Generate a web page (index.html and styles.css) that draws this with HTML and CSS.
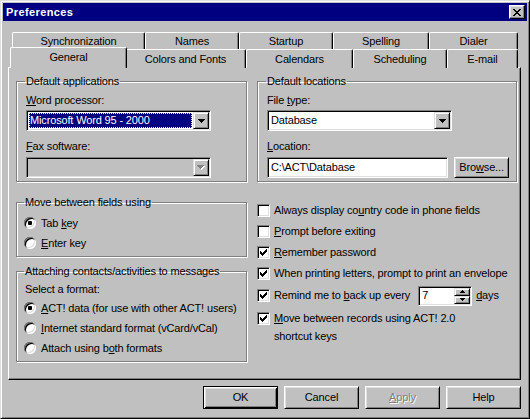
FILE: index.html
```html
<!DOCTYPE html>
<html>
<head>
<meta charset="utf-8">
<title>Preferences</title>
<link rel="stylesheet" href="styles.css">
</head>
<body>
<div class="window">
  <div class="titlebar">
    <span class="title">Preferences</span>
    <span class="close"><svg width="8" height="7" viewBox="0 0 8 7" shape-rendering="crispEdges"><path d="M0 0h2v1h-2z M6 0h2v1h-2z M1 1h2v1h-2z M5 1h2v1h-2z M2 2h4v1h-4z M3 3h2v1h-2z M2 4h4v1h-4z M1 5h2v1h-2z M5 5h2v1h-2z M0 6h2v1h-2z M6 6h2v1h-2z" fill="#000"/></svg></span>
  </div>
  <div class="main">
    <div class="tabrow back">
      <div class="tab t-sync">Synchronization</div>
      <div class="tab t-names">Names</div>
      <div class="tab t-startup">Startup</div>
      <div class="tab t-spell">Spelling</div>
      <div class="tab t-dialer">Dialer</div>
    </div>
    <div class="tabrow front">
      <div class="tab selected t-general">General</div>
      <div class="tab t-colors">Colors and Fonts</div>
      <div class="tab t-cal">Calendars</div>
      <div class="tab t-sched">Scheduling</div>
      <div class="tab t-email">E-mail</div>
    </div>
    <div class="panel">
      <div class="layout">
        <fieldset class="group apps">
          <legend>Default applications</legend>
          <div class="fields">
            <div class="label"><u>W</u>ord processor:</div>
            <div class="combo gap-s">
              <span class="ctext sel">Microsoft Word 95 - 2000</span>
              <span class="drop"><svg width="7" height="4" viewBox="0 0 7 4" shape-rendering="crispEdges"><path d="M0 0h7v1h-7z M1 1h5v1h-5z M2 2h3v1h-3z M3 3h1v1h-1z" fill="#000"/></svg></span>
            </div>
            <div class="label gap-l"><u>F</u>ax software:</div>
            <div class="combo disabled gap-m">
              <span class="ctext"></span>
              <span class="drop"><svg width="8" height="5" viewBox="0 0 8 5" shape-rendering="crispEdges"><path d="M1 1h7v1h-7z M2 2h5v1h-5z M3 3h3v1h-3z M4 4h1v1h-1z" fill="#fff"/><path d="M0 0h7v1h-7z M1 1h5v1h-5z M2 2h3v1h-3z M3 3h1v1h-1z" fill="#808080"/></svg></span>
            </div>
          </div>
        </fieldset>
        <fieldset class="group locs">
          <legend>Default locations</legend>
          <div class="fields">
            <div class="label">File <u>t</u>ype:</div>
            <div class="combo gap-s">
              <span class="ctext">Database</span>
              <span class="drop"><svg width="7" height="4" viewBox="0 0 7 4" shape-rendering="crispEdges"><path d="M0 0h7v1h-7z M1 1h5v1h-5z M2 2h3v1h-3z M3 3h1v1h-1z" fill="#000"/></svg></span>
            </div>
            <div class="label gap-l"><u>L</u>ocation:</div>
            <div class="locrow gap-m">
              <div class="field">C:\ACT\Database</div>
              <div class="btn browse">Bro<u>w</u>se...</div>
            </div>
          </div>
        </fieldset>
        <div class="leftcol">
          <fieldset class="group move">
            <legend>Move between fields using</legend>
            <div class="opt"><span class="radio on"></span><span>Tab <u>k</u>ey</span></div>
            <div class="opt"><span class="radio"></span><span><u>E</u>nter key</span></div>
          </fieldset>
          <fieldset class="group attach">
            <legend>Attaching contacts/activities to messages</legend>
            <div class="label sub">Select a format:</div>
            <div class="opts">
              <div class="opt"><span class="radio on"></span><span><u>A</u>CT! data (for use with other ACT! users)</span></div>
              <div class="opt"><span class="radio"></span><span><u>I</u>nternet standard format (vCard/vCal)</span></div>
              <div class="opt"><span class="radio"></span><span>Attach using b<u>o</u>th formats</span></div>
            </div>
          </fieldset>
        </div>
        <div class="checks">
          <div class="chk"><span class="box"></span><span>Always display co<u>u</u>ntry code in phone fields</span></div>
          <div class="chk"><span class="box"></span><span><u>P</u>rompt before exiting</span></div>
          <div class="chk"><span class="box"><svg width="7" height="7" viewBox="0 0 7 7" shape-rendering="crispEdges"><path d="M6 0h1v1h-1z M5 1h2v1h-2z M0 2h1v1h-1z M4 2h3v1h-3z M0 3h2v1h-2z M3 3h3v1h-3z M0 4h5v1h-5z M1 5h3v1h-3z M2 6h1v1h-1z" fill="#000"/></svg></span><span><u>R</u>emember password</span></div>
          <div class="chk"><span class="box"><svg width="7" height="7" viewBox="0 0 7 7" shape-rendering="crispEdges"><path d="M6 0h1v1h-1z M5 1h2v1h-2z M0 2h1v1h-1z M4 2h3v1h-3z M0 3h2v1h-2z M3 3h3v1h-3z M0 4h5v1h-5z M1 5h3v1h-3z M2 6h1v1h-1z" fill="#000"/></svg></span><span>When printing letters, prompt to print an envelope</span></div>
          <div class="chk spinrow"><span class="box"><svg width="7" height="7" viewBox="0 0 7 7" shape-rendering="crispEdges"><path d="M6 0h1v1h-1z M5 1h2v1h-2z M0 2h1v1h-1z M4 2h3v1h-3z M0 3h2v1h-2z M3 3h3v1h-3z M0 4h5v1h-5z M1 5h3v1h-3z M2 6h1v1h-1z" fill="#000"/></svg></span><span>Remind me to <u>b</u>ack up every</span>
            <span class="spin">
              <span class="spintext">7</span>
              <span class="updown">
                <span class="arr"><svg width="5" height="3" viewBox="0 0 5 3" shape-rendering="crispEdges"><path d="M2 0h1v1h-1z M1 1h3v1h-3z M0 2h5v1h-5z" fill="#000"/></svg></span>
                <span class="arr"><svg width="5" height="3" viewBox="0 0 5 3" shape-rendering="crispEdges"><path d="M0 0h5v1h-5z M1 1h3v1h-3z M2 2h1v1h-1z" fill="#000"/></svg></span>
              </span>
            </span>
            <span class="days"><u>d</u>ays</span>
          </div>
          <div class="chk multi"><span class="box"><svg width="7" height="7" viewBox="0 0 7 7" shape-rendering="crispEdges"><path d="M6 0h1v1h-1z M5 1h2v1h-2z M0 2h1v1h-1z M4 2h3v1h-3z M0 3h2v1h-2z M3 3h3v1h-3z M0 4h5v1h-5z M1 5h3v1h-3z M2 6h1v1h-1z" fill="#000"/></svg></span><span><u>M</u>ove between records using ACT! 2.0<br>shortcut keys</span></div>
        </div>
      </div>
    </div>
    <div class="buttons">
      <div class="btn dlg default">OK</div>
      <div class="btn dlg">Cancel</div>
      <div class="btn dlg off"><u>A</u>pply</div>
      <div class="btn dlg">Help</div>
    </div>
  </div>
</div>
</body>
</html>
```

FILE: styles.css
```css
* { box-sizing: border-box; }
html, body { margin: 0; padding: 0; }
body {
  background: #c0c0c0;
  font-family: "Liberation Sans", Arial, sans-serif;
  font-size: 11px;
  line-height: 13px;
  letter-spacing: -0.15px;
  color: #000;
}
u { text-underline-offset: 1px; }

.window {
  width: 530px;
  height: 419px;
  background: #c0c0c0;
  border: 1px solid;
  border-color: #dfdfdf #000 #000 #dfdfdf;
  box-shadow: inset 1px 1px #fff, inset -1px -1px #808080;
  padding: 2px;
}

.titlebar {
  height: 18px;
  background: #000080;
  color: #fff;
  display: flex;
  align-items: center;
  justify-content: space-between;
  padding: 0 2px 0 3px;
}
.title { font-weight: bold; letter-spacing: 0.4px; }
.close {
  width: 16px;
  height: 14px;
  background: #c0c0c0;
  border: 1px solid;
  border-color: #fff #000 #000 #fff;
  box-shadow: inset -1px -1px #808080, inset 1px 1px #dfdfdf;
  display: flex;
  align-items: center;
  justify-content: center;
}
.close svg { display: block; }

.main { margin: 11px 0 0 5px; width: 513px; }

.tabrow { display: flex; margin-left: 4px; }
.tabrow.back { height: 17px; }
.tabrow.front { height: 18px; }
.tab {
  height: 100%;
  background: #c0c0c0;
  border-top: 1px solid #fff;
  border-left: 1px solid #fff;
  border-right: 1px solid #000;
  box-shadow: inset -1px 0 #808080;
  border-radius: 2px 2px 0 0;
  text-align: center;
  white-space: nowrap;
}
.back .tab { padding-top: 2px; }
.front .tab { padding-top: 3px; height: 19px; }
.tab.selected {
  position: relative;
  z-index: 1;
  height: 21px;
  margin: -2px -2px 0 -2px;
}
.t-sync { width: 133px; }
.t-names { width: 94px; }
.t-startup { width: 94px; }
.t-spell { width: 96px; }
.t-dialer { width: 89px; }
.t-general { width: 117px; }
.t-colors { width: 121px; }
.t-cal { width: 107px; }
.t-sched { width: 94px; }
.t-email { width: 71px; }

.panel {
  height: 313px;
  border: 1px solid;
  border-color: #fff #000 #000 #fff;
  box-shadow: inset -1px -1px #808080;
  padding: 7px 3px 0 7px;
}

.layout {
  display: grid;
  grid-template-columns: 231px 260px;
  column-gap: 10px;
  row-gap: 14px;
}

.group {
  margin: 0;
  padding: 0 7px 3px;
  border: 1px solid #808080;
  box-shadow: inset 1px 1px #fff, 1px 1px #fff;
  min-width: 0;
}
.group legend { padding: 0 1px; line-height: 13px; white-space: nowrap; }
.fields { padding: 6px 0 0 2px; }
.apps legend, .locs legend { margin-left: 1px; }

.gap-s { margin-top: 3px; }
.gap-m { margin-top: 4px; }
.gap-l { margin-top: 9px; }

.combo {
  width: 185px;
  height: 21px;
  display: flex;
  background: #fff;
  border: 1px solid;
  border-color: #808080 #fff #fff #808080;
  box-shadow: inset 1px 1px #000, inset -1px -1px #dfdfdf;
  padding: 1px;
}
.combo.disabled { background: #c0c0c0; }
.ctext {
  flex: 1;
  display: flex;
  align-items: center;
  padding-left: 2px;
  white-space: nowrap;
}
.ctext.sel {
  margin: 1px;
  padding-left: 1px;
  background: #000080;
  color: #fff;
  outline: 1px dotted #ffff80;
  outline-offset: -1px;
}
.drop {
  width: 16px;
  height: 17px;
  background: #c0c0c0;
  border: 1px solid;
  border-color: #dfdfdf #000 #000 #dfdfdf;
  box-shadow: inset 1px 1px #fff, inset -1px -1px #808080;
  display: flex;
  align-items: center;
  justify-content: center;
}
.drop svg { display: block; }

.locrow { display: flex; gap: 6px; }
.field {
  width: 185px;
  height: 21px;
  background: #fff;
  border: 1px solid;
  border-color: #808080 #fff #fff #808080;
  box-shadow: inset 1px 1px #000, inset -1px -1px #dfdfdf;
  padding: 0 3px;
  display: flex;
  align-items: center;
  white-space: nowrap;
}

.btn {
  background: #c0c0c0;
  border: 1px solid;
  border-color: #fff #000 #000 #fff;
  box-shadow: inset 1px 1px #dfdfdf, inset -1px -1px #808080;
  display: flex;
  align-items: center;
  justify-content: center;
  white-space: nowrap;
}
.browse { width: 56px; height: 21px; }

.leftcol { display: flex; flex-direction: column; }
.move { padding-top: 4px; }
.attach { margin-top: 8px; }
.sub { padding: 5px 0 0 1px; }
.opts { margin-top: 2px; }
.opt { height: 20px; display: flex; align-items: center; gap: 5px; white-space: nowrap; }
.radio {
  width: 12px;
  height: 12px;
  border-radius: 50%;
  background: #fff;
  box-shadow: inset 1px 1px #808080, inset -1px -1px #fff, inset 2px 2px #000, inset -2px -2px #dfdfdf;
  display: flex;
  align-items: center;
  justify-content: center;
  flex: none;
}
.radio.on::after {
  content: "";
  width: 4px;
  height: 4px;
  border-radius: 1px;
  background: #000;
}

.checks { padding-top: 4px; }
.chk { height: 21px; display: flex; align-items: center; gap: 4px; white-space: nowrap; }
.box {
  width: 13px;
  height: 13px;
  flex: none;
  background: #fff;
  border: 1px solid;
  border-color: #808080 #fff #fff #808080;
  box-shadow: inset 1px 1px #000, inset -1px -1px #dfdfdf;
  display: flex;
  align-items: center;
  justify-content: center;
}
.box svg { display: block; }
.spinrow { height: 23px; }
.spin {
  margin-left: 4px;
  width: 54px;
  height: 20px;
  display: flex;
  background: #fff;
  border: 1px solid;
  border-color: #808080 #fff #fff #808080;
  box-shadow: inset 1px 1px #000, inset -1px -1px #dfdfdf;
  padding: 1px;
}
.spintext { flex: 1; display: flex; align-items: center; padding-left: 2px; }
.updown { width: 16px; display: flex; flex-direction: column; }
.arr {
  flex: 1;
  background: #c0c0c0;
  border: 1px solid;
  border-color: #dfdfdf #000 #000 #dfdfdf;
  box-shadow: inset 1px 1px #fff, inset -1px -1px #808080;
  display: flex;
  align-items: center;
  justify-content: center;
}
.arr svg { display: block; }
.chk.multi { height: auto; align-items: flex-start; margin-top: 2px; line-height: 18px; }
.chk.multi .box { margin-top: 3px; }

.buttons {
  display: flex;
  justify-content: flex-end;
  gap: 6px;
  margin-top: 6px;
}
.dlg { width: 75px; height: 23px; }
.dlg.default {
  border: 1px solid #000;
  box-shadow: inset 1px 1px #fff, inset -1px -1px #000, inset 2px 2px #dfdfdf, inset -2px -2px #808080;
}
.dlg.off { color: #808080; text-shadow: 1px 1px #fff; }
```
